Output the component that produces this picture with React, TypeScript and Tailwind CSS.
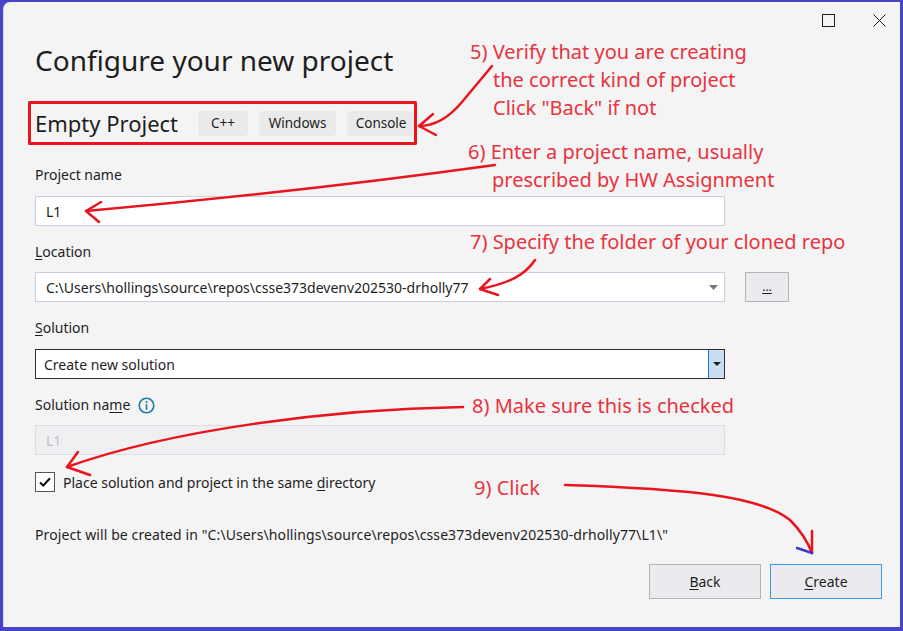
import React from 'react';

const FONT = "font-['Noto_Sans','Open_Sans',sans-serif]";

const Label: React.FC<{ children: React.ReactNode; className?: string }> = ({ children, className = '' }) => (
  <div className={`h-[20px] leading-[20px] text-[14px] text-[#1e1e1e] flex items-center ${className}`}>{children}</div>
);

const Tag: React.FC<{ text: string; w: string }> = ({ text, w }) => (
  <div className={`${w} h-[25px] rounded-[4px] bg-[#eaeaea] flex items-center justify-center text-[13.5px] text-[#1e1e1e]`}>
    {text}
  </div>
);

const Note: React.FC<{ text: string; className: string }> = ({ text, className }) => (
  <div className={`absolute whitespace-nowrap text-[20px] leading-[28px] text-[#e8333f] ${className}`}>{text}</div>
);

export default function App() {
  return (
    <div className={`relative w-[903px] h-[631px] bg-[#4545c9] pt-[2px] pl-[3px] pr-[3px] pb-[4px] ${FONT}`}>
      <div className="relative w-full h-full bg-[#f4f4f4] rounded-tl-[7px] border-l border-[#d8d8e8] flex flex-col pl-[31px] pr-[18px]">
        {/* window buttons */}
        <div className="absolute top-[12px] right-[14px] flex items-center gap-[38px]">
          <div className="w-[13px] h-[13px] border border-[#1e1e1e]" />
          <svg width="13" height="13" viewBox="0 0 13 13">
            <path d="M0.5 0.5 L12.5 12.5 M12.5 0.5 L0.5 12.5" stroke="#1e1e1e" strokeWidth="1" />
          </svg>
        </div>

        <h1 className="mt-[40px] h-[36px] leading-[36px] text-[28px] text-[#1e1e1e]">Configure your new project</h1>

        <div className="mt-[33px] h-[25px] flex items-center">
          <span className="text-[22px] text-[#1e1e1e] mr-[20px]">Empty Project</span>
          <div className="flex gap-[11px]">
            <Tag text="C++" w="w-[50px]" />
            <Tag text="Windows" w="w-[77px]" />
            <Tag text="Console" w="w-[68px]" />
          </div>
        </div>

        <Label className="mt-[29px]">Project name</Label>
        <div className="mt-[11px] w-[690px] h-[30px] bg-white border border-[#cdcde0] flex items-center px-[10px] text-[14px] text-[#1e1e1e]">
          L1
        </div>

        <Label className="mt-[16px]">
          <span><u className="underline-offset-2">L</u>ocation</span>
        </Label>
        <div className="mt-[10px] flex gap-[20px]">
          <div className="w-[690px] h-[30px] bg-white border border-[#cdcde0] flex items-center justify-between pl-[10px] pr-[6px] text-[14px] text-[#1e1e1e]">
            <span>C:\Users\hollings\source\repos\csse373devenv202530-drholly77</span>
            <svg width="9" height="5" viewBox="0 0 9 5"><path d="M0 0 H9 L4.5 5 Z" fill="#777" /></svg>
          </div>
          <div className="w-[44px] h-[30px] bg-[#ebebef] border border-[#b5b5b5] flex items-center justify-center text-[12px] text-[#1e1e1e]">
            <u className="underline-offset-2">...</u>
          </div>
        </div>

        <Label className="mt-[16px]">
          <span><u className="underline-offset-2">S</u>olution</span>
        </Label>
        <div className="mt-[11px] w-[690px] h-[30px] bg-white border border-[#2e2e2e] flex items-stretch text-[14px] text-[#1e1e1e]">
          <div className="flex-1 flex items-center pl-[8px]">Create new solution</div>
          <div className="w-[16px] bg-[#c9ddf3] border-l border-[#1d7ad6] flex items-center justify-center">
            <svg width="8" height="4" viewBox="0 0 8 4"><path d="M0 0 H8 L4 4 Z" fill="#1e1e1e" /></svg>
          </div>
        </div>

        <Label className="mt-[16px]">
          <span>Solution na<u className="underline-offset-2">m</u>e</span>
          <svg className="ml-[8px]" width="17" height="17" viewBox="0 0 17 17">
            <circle cx="8.5" cy="8.5" r="7.3" fill="none" stroke="#1b7ba6" strokeWidth="1.6" />
            <circle cx="8.5" cy="5" r="1.1" fill="#1b7ba6" />
            <rect x="7.7" y="7.2" width="1.6" height="5.6" fill="#1b7ba6" />
          </svg>
        </Label>
        <div className="mt-[10px] w-[690px] h-[30px] bg-[#f0f0f3] border border-[#dcdce3] flex items-center px-[10px] text-[14px] text-[#c2c2c6]">
          L1
        </div>

        <div className="mt-[17px] flex items-center h-[20px]">
          <div className="w-[20px] h-[20px] bg-white border border-[#555] flex items-center justify-center">
            <svg width="12" height="10" viewBox="0 0 12 10">
              <path d="M1 5.5 L4.3 8.5 L11 1.2" fill="none" stroke="#111" strokeWidth="2" />
            </svg>
          </div>
          <span className="ml-[8px] text-[14px] text-[#1e1e1e]">
            Place solution and project in the same <u className="underline-offset-2">d</u>irectory
          </span>
        </div>

        <div className="mt-[33px] h-[20px] leading-[20px] text-[14px] tracking-[0.1px] text-[#1e1e1e]">
          Project will be created in "C:\Users\hollings\source\repos\csse373devenv202530-drholly77\L1\"
        </div>

        <div className="mt-[19px] flex justify-end gap-[9px]">
          <div className="w-[112px] h-[35px] bg-[#ebebef] border border-[#b3b3b3] flex items-center justify-center text-[14px] text-[#1e1e1e]">
            <span><u className="underline-offset-2">B</u>ack</span>
          </div>
          <div className="w-[112px] h-[35px] bg-[#ebebef] border border-[#3d9bea] flex items-center justify-center text-[14px] text-[#1e1e1e]">
            <span><u className="underline-offset-2">C</u>reate</span>
          </div>
        </div>
      </div>

      {/* annotations drawn over the dialog */}
      <svg className="absolute top-0 left-0 pointer-events-none" width="903" height="631" viewBox="0 0 903 631">
        <g fill="none" stroke="#e8151f" strokeWidth="2.5" strokeLinecap="round" strokeLinejoin="round">
          <rect x="29.5" y="102.5" width="386" height="41" strokeWidth="3" strokeLinecap="butt" />
          <path d="M419 126 C438 126 452 114 462 102 L492 66" />
          <path d="M433 114 L419 126 L436 135" />
          <path d="M86 211 Q300 192 495 165" />
          <path d="M101 202 L86 211 L99 222" />
          <path d="M535 260 C525 275 510 283 480 289" />
          <path d="M490 279 L480 289 L498 295" />
          <path d="M463 407 C330 409 170 430 67 467" />
          <path d="M78 452 L67 467 L90 475" />
          <path d="M565 485 C690 489 760 496 790 520 Q805 535 812 553" />
          <path d="M812 531 L812 553" />
        </g>
        <path d="M797 548 L812 553" stroke="#3b3bd0" strokeWidth="2.5" strokeLinecap="round" />
      </svg>

      <Note text="5) Verify that you are creating" className="left-[470px] top-[38px]" />
      <Note text="the correct kind of project" className="left-[493px] top-[66px]" />
      <Note text={'Click "Back" if not'} className="left-[493px] top-[94px]" />
      <Note text="6) Enter a project name, usually" className="left-[468px] top-[138px]" />
      <Note text="prescribed by HW Assignment" className="left-[492px] top-[166px]" />
      <Note text="7) Specify the folder of your cloned repo" className="left-[470px] top-[228px]" />
      <Note text="8) Make sure this is checked" className="left-[472px] top-[392px]" />
      <Note text="9) Click" className="left-[474px] top-[474px]" />
    </div>
  );
}
